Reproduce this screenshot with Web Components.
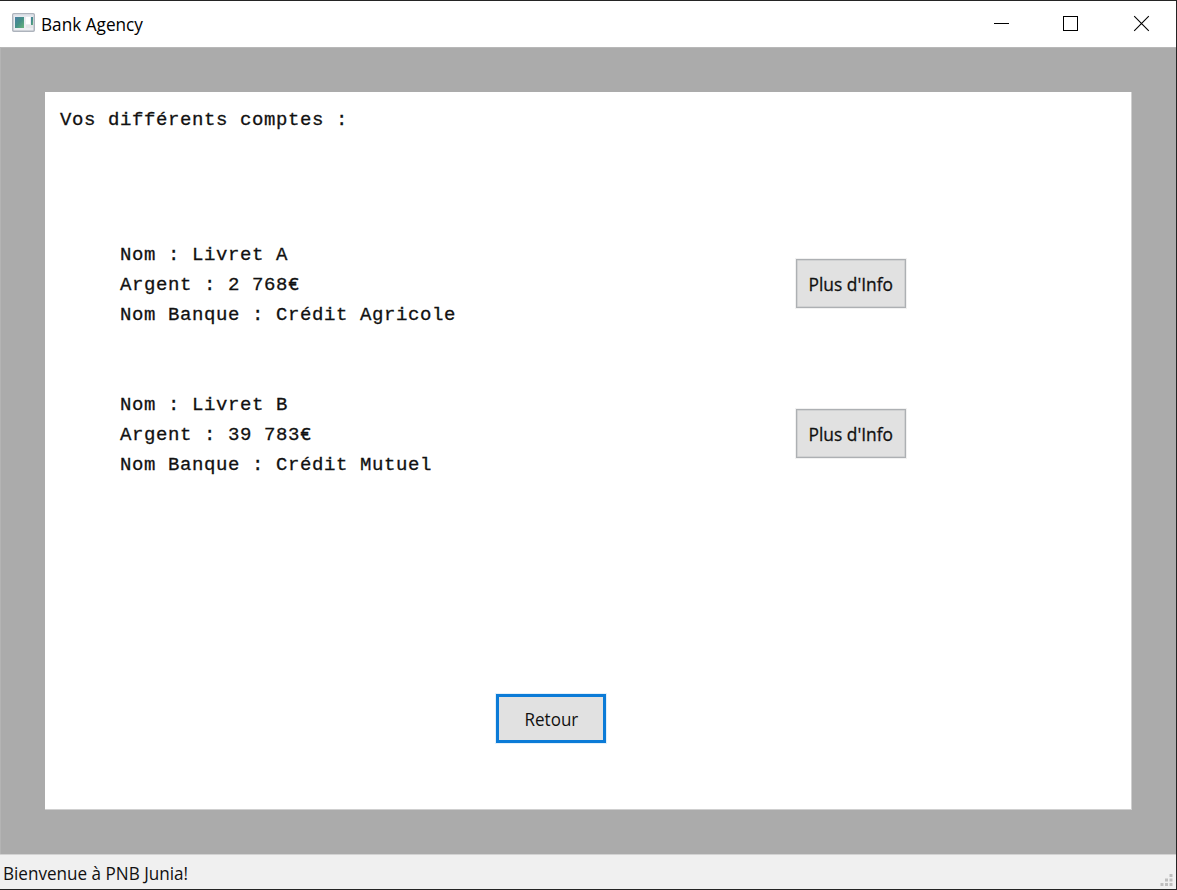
<!DOCTYPE html>
<html lang="fr">
<head>
<meta charset="utf-8">
<title>Bank Agency</title>
<style>
html,body{margin:0;height:100%;overflow:hidden}
</style>
</head>
<body>
<bank-window></bank-window>
<script>
const define = (name, html) => customElements.define(name, class extends HTMLElement {
  constructor() {
    super();
    const t = document.createElement('template');
    t.innerHTML = html;
    this.attachShadow({mode: 'open'}).append(t.content.cloneNode(true));
  }
});

define('title-bar', `
<style>
:host{display:flex;align-items:center;height:46px;box-sizing:border-box;background:#fff;padding-left:12px;color:#000;
 font:18px/24px "Open Sans","Noto Sans",sans-serif}
.icon{display:block;margin-top:-3px}
.name{flex:1;margin-left:6px;white-space:nowrap}
.name span{display:inline-block;transform-origin:0 50%;transform:scaleX(var(--title-scale,1))}
.controls svg{display:block}
</style>
<svg class="icon" width="23" height="19" viewBox="0 0 23 19">
 <defs><linearGradient id="g" x1="0" y1="0" x2="1" y2="1"><stop offset="0" stop-color="#4a7fa5"/><stop offset=".5" stop-color="#459087"/><stop offset="1" stop-color="#68b57a"/></linearGradient></defs>
 <rect x=".75" y=".75" width="21.5" height="17.5" rx="1" fill="#eceef2" stroke="#adb3bc" stroke-width="1.5"/>
 <rect x="1.5" y="1.5" width="20" height="2" fill="#dfe3ea"/>
 <rect x="3" y="4" width="9" height="11" fill="url(#g)"/>
 <rect x="14" y="4" width="4" height="7" fill="#fff"/><rect x="14" y="12" width="7" height="3" fill="#e3e5e7"/>
 <rect x="19" y="4" width="2" height="8" fill="url(#g)"/>
</svg>
<div class="name"><span><slot></slot></span></div>
<div class="controls">
<svg width="196" height="46" viewBox="0 0 196 46" fill="none" stroke="#000" shape-rendering="crispEdges">
 <path d="M14 22.5H29"/><rect x="83.5" y="15.5" width="14" height="14"/>
 <path d="M154.2 15.2L168.8 29.8M168.8 15.2L154.2 29.8" shape-rendering="geometricPrecision" stroke-width="1.1"/>
</svg>
</div>`);

define('push-button', `
<style>
:host{display:block;width:110px;height:49px}
button{display:flex;align-items:center;justify-content:center;width:100%;height:100%;box-sizing:border-box;margin:0;padding:0 1px 0 0;
 background:#e1e1e1;border:1.5px solid #adb0b3;box-shadow:0 0 0 1px #f1f1f1,inset 0 0 0 .5px #c0c2c4;outline:none;color:#111;font:18px/24px "Open Sans","Noto Sans",sans-serif}
:host([default]) button{border:3px solid #0b7bd7;box-shadow:0 0 0 1px #e2f0fb;padding:0}
span{display:block;white-space:nowrap;transform:scaleX(var(--label-scale,1))}
</style>
<button><span><slot></slot></span></button>`);

define('account-row', `
<style>
:host{display:flex;justify-content:space-between;align-items:flex-start;height:150px}
.lines{line-height:30px;white-space:pre}
push-button{margin-top:19px}
</style>
<div class="lines"><slot></slot></div><push-button>Plus d'Info</push-button>`);

define('accounts-panel', `
<style>
:host{display:flex;flex-direction:column;box-sizing:border-box;background:#fff;border:solid #cfcfcf;border-width:0 1px 1px 0;
 font:400 19px/30px "Liberation Mono",monospace;letter-spacing:.6px;color:#111;-webkit-text-stroke:.3px #111}
h1{margin:13px 0 105px 15px;font:inherit;line-height:30px}
.list{margin-left:75px;width:786px}
push-button{letter-spacing:0;-webkit-text-stroke:0}
footer{margin:auto 0 66px 451px}
</style>
<h1>Vos différents comptes :</h1>
<div class="list"><slot></slot></div>
<footer><push-button default style="--label-scale:var(--retour-scale)">Retour</push-button></footer>`);

define('status-bar', `
<style>
:host{display:flex;justify-content:space-between;align-items:flex-start;height:35px;box-sizing:border-box;background:#f0f0f0;border-top:1px solid #d2d2d2;
 font:18px/24px "Open Sans","Noto Sans",sans-serif;color:#111;padding:6px 2px 0 3px}
span{display:inline-block;white-space:nowrap;transform-origin:0 50%;transform:scaleX(var(--status-scale,1))}
svg{display:block;margin-top:12px}
</style>
<span><slot></slot></span>
<svg width="14" height="14" fill="#bfbfbf"><path d="M9.5 1h3v3h-3zM5 5.5h3v3H5zM9.5 5.5h3v3h-3zM.5 10h3v3h-3zM5 10h3v3H5zM9.5 10h3v3h-3z"/></svg>`);

define('bank-window', `
<style>
:host{display:flex;flex-direction:column;box-sizing:border-box;width:1177px;height:890px;border:solid #242424;border-width:1px 1px 1px 0;background:#ababab;
 --title-scale:.955;--label-scale:.965;--retour-scale:.945;--status-scale:.95}
main{flex:1;display:flex;box-sizing:border-box;padding:44px 44px 44px 44px;border-top:1px solid #b8b8b8;border-left:1px solid #b4b4b4;min-height:0}
accounts-panel{flex:1}
</style>
<title-bar>Bank Agency</title-bar>
<main><accounts-panel>
<account-row>Nom : Livret A<br>Argent : 2 768€<br>Nom Banque : Crédit Agricole</account-row><account-row>Nom : Livret B<br>Argent : 39 783€<br>Nom Banque : Crédit Mutuel</account-row>
</accounts-panel></main>
<status-bar>Bienvenue à PNB Junia!</status-bar>`);
</script>
</body>
</html>
